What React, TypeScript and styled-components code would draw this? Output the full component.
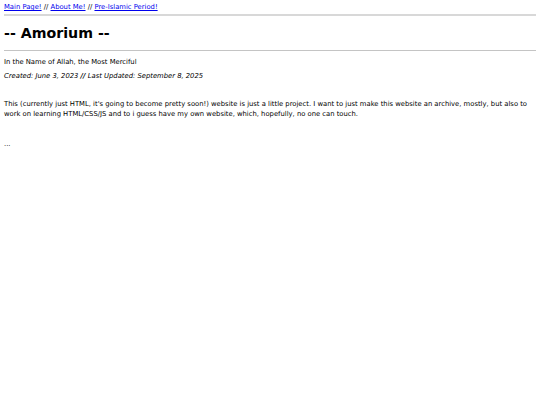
import styled, { createGlobalStyle } from "styled-components";

const GlobalStyle = createGlobalStyle`
  body {
    margin: 0;
    background: #ffffff;
    color: #000000;
    font-family: "DejaVu Sans", Verdana, sans-serif;
    font-size: 6.8px;
  }
`;

const Page = styled.div`
  padding: 2px 4px;
`;

const Nav = styled.nav`
  line-height: 10px;
`;

const NavLink = styled.a`
  color: #0000ee;
  text-decoration: underline;
`;

const Rule = styled.hr<{ $thick?: boolean }>`
  border: none;
  height: ${(p) => (p.$thick ? "2px" : "1px")};
  background: ${(p) => (p.$thick ? "#d8d8d8" : "#c4c4c4")};
  margin: ${(p) => (p.$thick ? "2px 0 0" : "0")};
`;

const Title = styled.h1`
  font-size: 14.2px;
  font-weight: bold;
  margin: 8px 0;
  line-height: 18px;
`;

const Line = styled.p<{ $italic?: boolean; $gap: number }>`
  margin: ${(p) => p.$gap}px 0 0;
  line-height: 10px;
  font-style: ${(p) => (p.$italic ? "italic" : "normal")};
`;

const Body = styled.p`
  margin: 18px 0 0;
  line-height: 10px;
`;

const Ellipsis = styled.p`
  margin: 20px 0 0;
  line-height: 10px;
`;

export default function App() {
  return (
    <>
      <GlobalStyle />
      <Page>
        <Nav>
          <NavLink href="#">Main Page!</NavLink> //{" "}
          <NavLink href="#">About Me!</NavLink> //{" "}
          <NavLink href="#">Pre-Islamic Period!</NavLink>
        </Nav>
        <Rule $thick />
        <Title>-- Amorium --</Title>
        <Rule />
        <Line $gap={6}>In the Name of Allah, the Most Merciful</Line>
        <Line $gap={4} $italic>
          Created: June 3, 2023 <b>//</b> Last Updated: September 8, 2025
        </Line>
        <Body>
          This (currently just HTML, it's going to become pretty soon!) website
          is just a little project. I want to just make this website an archive,
          mostly, but also to work on learning HTML/CSS/JS and to i guess have my
          own website, which, hopefully, no one can touch.
        </Body>
        <Ellipsis>...</Ellipsis>
      </Page>
    </>
  );
}
